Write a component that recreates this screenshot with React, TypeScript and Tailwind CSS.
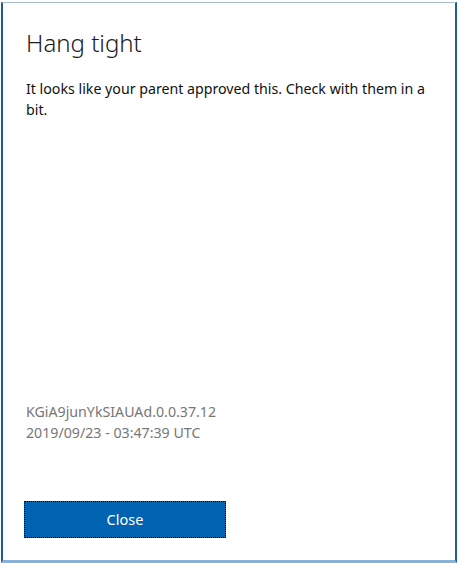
import React from 'react';

export default function App() {
  return (
    <div className="w-[459px] h-[563px] bg-white" style={{ fontFamily: '"Noto Sans", "Open Sans", sans-serif' }}>
      <div className="ml-[1px] mt-[2px] w-[456px] h-[561px] flex flex-col border-t border-t-[#a9bccc] border-l-2 border-l-[#1e5f8c] border-r-2 border-r-[#1e5f8c] border-b-[3px] border-b-[#86b3d9]">
        <div className="flex-1 flex flex-col pl-[21px] pr-[18px]">
          <h1 className="ml-[2px] mt-[24px] text-[24px] leading-[32px] font-light text-[#1a1a1a]">Hang tight</h1>
          <p className="ml-[2px] mt-[19px] text-[14.2px] leading-[21px] text-[#111]">
            It looks like your parent approved this. Check with them in a bit.
          </p>
          <div className="ml-[2px] mt-auto mb-[58px] text-[14.2px] leading-[21px] text-[#777]">
            <div>KGiA9junYkSIAUAd.0.0.37.12</div>
            <div>2019/09/23 - 03:47:39 UTC</div>
          </div>
          <button className="mb-[22px] w-[202px] h-[37px] bg-[#0063b1] text-white text-[14.5px] outline-dotted outline-1 outline-black -outline-offset-1">
            Close
          </button>
        </div>
      </div>
    </div>
  );
}
